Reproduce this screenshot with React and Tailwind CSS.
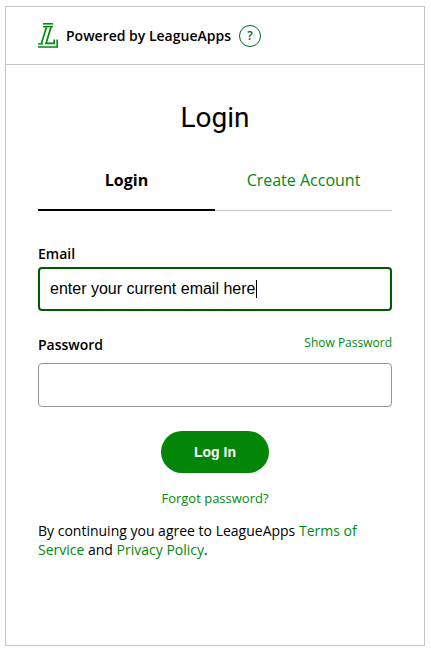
import { useState } from "react";

function LeagueAppsLogo() {
  return (
    <svg viewBox="0 0 20 25" className="h-[25px] w-5 shrink-0" fill="none" stroke="#008a0e" aria-hidden="true">
      <path strokeWidth="1.6" d="M5 0.8H15" />
      <path strokeWidth="1.4" d="M5 3.6H15" />
      <path strokeWidth="1.7" d="M8.6 3.6L3.4 20.6" />
      <path strokeWidth="1.7" d="M13.2 3.6L8 20.4H16.2V16.5" />
      <path strokeWidth="1.4" d="M0 20.9H5" />
      <path strokeWidth="1.6" d="M0 24H19.2V16.5" />
    </svg>
  );
}

export default function App() {
  const [email, setEmail] = useState("enter your current email here");
  const [password, setPassword] = useState("");
  const [showPassword, setShowPassword] = useState(false);

  return (
    <div className="min-h-screen flex bg-white py-[6px] pl-[5px] pr-[6px] font-['Open_Sans',sans-serif] text-black">
      <main className="flex-1 border border-[#c6c6c6]">
        {/* HEADER */}
        <header className="flex h-[58px] items-center border-b border-[#c6c6c6] px-8">
          <LeagueAppsLogo />
          <span className="ml-2 text-sm font-semibold">Powered by LeagueApps</span>
          <button
            type="button"
            aria-label="Help"
            className="ml-2 h-[22px] w-[22px] rounded-full border border-[#00691b] text-xs font-semibold text-[#00691b]"
          >
            ?
          </button>
        </header>

        <div className="px-8 pt-8">
          <h1 className="text-center font-['Roboto',sans-serif] text-[28px] leading-[42px]">Login</h1>

          {/* TABS */}
          <div role="tablist" className="mt-6 flex border-b border-[#c6c6c6]">
            <button
              type="button"
              role="tab"
              aria-selected="true"
              className="-mb-px h-12 flex-1 border-b-2 border-black pb-3 text-base leading-6 font-bold"
            >
              Login
            </button>
            <button
              type="button"
              role="tab"
              aria-selected="false"
              className="-mb-px h-12 flex-1 border-b-2 border-transparent pb-3 text-base leading-6 text-[#008a0e]"
            >
              Create Account
            </button>
          </div>

          <form className="mt-[30px]" onSubmit={(e) => e.preventDefault()}>
            <label htmlFor="email" className="block text-sm leading-[26px] font-semibold">
              Email
            </label>
            <div className="relative">
              <input
                id="email"
                type="text"
                value={email}
                onChange={(e) => setEmail(e.target.value)}
                className="block h-11 w-full rounded border-2 border-[#005a00] px-[10px] font-['Liberation_Sans',sans-serif] text-base caret-transparent outline-none"
              />
              <span className="absolute top-[13px] left-[218px] h-[18px] w-px bg-black" />
            </div>

            <div className="mt-5 mb-1 flex items-start justify-between">
              <label htmlFor="password" className="text-sm leading-7 font-semibold">
                Password
              </label>
              <button
                type="button"
                onClick={() => setShowPassword(!showPassword)}
                className="text-xs leading-6 text-[#008a0e]"
              >
                Show Password
              </button>
            </div>
            <input
              id="password"
              type={showPassword ? "text" : "password"}
              value={password}
              onChange={(e) => setPassword(e.target.value)}
              className="block h-11 w-full rounded border border-[#949494] px-3 font-['Liberation_Sans',sans-serif] text-base outline-none"
            />

            <button
              type="submit"
              className="mx-auto mt-6 block h-[42px] w-[108px] rounded-full bg-[#038508] font-['Liberation_Sans',sans-serif] text-sm font-bold text-white"
            >
              Log In
            </button>
          </form>

          <div className="mt-4 text-center">
            <a href="#forgot" className="block text-[13px] leading-[18px] text-[#008a0e]">
              Forgot password?
            </a>
          </div>
          <p className="mt-[14px] text-sm leading-[19px]">
            By continuing you agree to LeagueApps{" "}
            <a href="#terms" className="text-[#008a0e]">Terms of Service</a> and{" "}
            <a href="#privacy" className="text-[#008a0e]">Privacy Policy</a>.
          </p>
        </div>
      </main>
    </div>
  );
}
